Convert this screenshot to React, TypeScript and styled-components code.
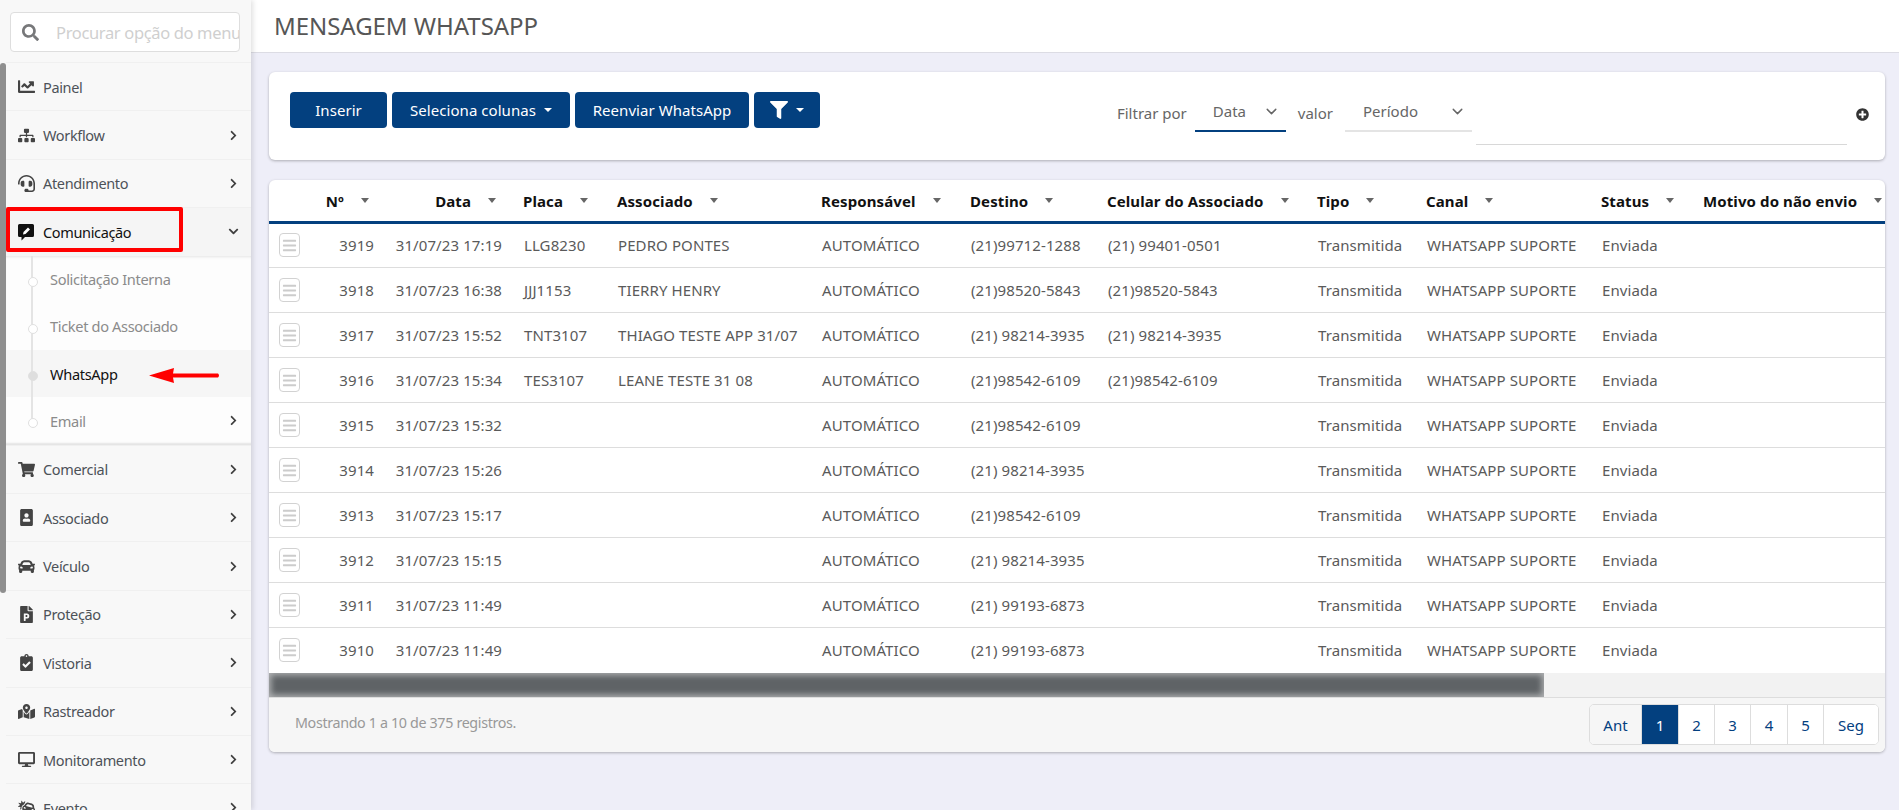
import React from "react";
import styled, { createGlobalStyle } from "styled-components";
import {
  FaSearch, FaChartLine, FaSitemap, FaHeadset, FaChevronRight, FaChevronDown, FaShoppingCart,
  FaPortrait, FaCar, FaFilePowerpoint, FaClipboardCheck, FaMapMarkedAlt, FaDesktop, FaCarCrash,
  FaFilter, FaPlusCircle, FaBars,
} from "react-icons/fa";
import { FiChevronDown } from "react-icons/fi";

const FONT = `"Noto Sans", "Open Sans", sans-serif`;
const BLUE = "#03407f";
const COLUMNS = "41px 75px 130px 94px 204px 149px 137px 210px 109px 175px 102px 190px";

const Global = createGlobalStyle`
  html, body { margin: 0; height: 810px; overflow: hidden; background: #eeeef8; }
  body { font-family: ${FONT}; font-size: 14px; letter-spacing: -0.35px; color: #555; }
  * { box-sizing: border-box; }
`;

const Shell = styled.div`
  display: flex;
  width: 1899px;
  height: 810px;
  overflow: hidden;
  position: relative;
`;

const Sidebar = styled.aside`
  flex: 0 0 251px;
  height: 810px;
  overflow: hidden;
  padding-left: 6px;
  background: #f8f8f8;
  box-shadow: 2px 0 5px rgba(0, 0, 0, 0.12);
  position: relative;
  z-index: 2;
`;

const ScrollThumb = styled.div`
  position: absolute;
  z-index: 3;
  left: 0;
  top: 63px;
  width: 6px;
  height: 530px;
  border-radius: 3px;
  background: #8f8f8f;
`;

const SearchWrap = styled.label`
  display: flex;
  align-items: center;
  margin: 12px 11px 10px 4px;
  height: 40px;
  padding-left: 11px;
  gap: 17px;
  background: #fff;
  border: 1px solid #dedede;
  border-radius: 4px;
  color: #77787a;
  font-size: 17px;
  overflow: hidden;
`;

const SearchInput = styled.input`
  flex: 1;
  min-width: 0;
  border: 0;
  outline: 0;
  padding: 0;
  font-family: ${FONT};
  font-size: 16.5px;
  letter-spacing: -0.35px;
  background: transparent;
  &::placeholder { color: #cfcfcf; opacity: 1; }
`;

const Nav = styled.nav`
  display: flex;
  flex-direction: column;
`;

const NavItem = styled.div<{ $open?: boolean }>`
  display: flex;
  align-items: center;
  flex: none;
  height: 48.4px;
  padding: 0 12px 0 10px;
  border-top: 1px solid #f0f0f0;
  font-size: 14.5px;
  color: ${(p) => (p.$open ? "#111" : "#4d5258")};
  background: ${(p) => (p.$open ? "#f5f5f5" : "transparent")};
`;

const NavIcon = styled.span`
  display: flex;
  align-items: center;
  justify-content: center;
  width: 20px;
  margin-right: 7px;
  font-size: 17px;
  color: #444;
`;

const NavLabel = styled.span`
  flex: 1;
`;

const Arrow = styled.span`
  display: flex;
  font-size: 11px;
  color: #3f3f3f;
`;

const SubMenu = styled.div`
  position: relative;
  background: #fdfdfd;
  box-shadow: inset 0 3px 3px -2px rgba(0, 0, 0, 0.1), inset 0 -3px 2px -1px rgba(0, 0, 0, 0.1);
  &::before {
    content: "";
    position: absolute;
    z-index: 1;
    left: 25px;
    top: 0;
    height: 166px;
    width: 2px;
    background: #e4e4e4;
  }
`;

const SubItem = styled.div<{ $active?: boolean }>`
  position: relative;
  display: flex;
  align-items: center;
  height: 47.25px;
  padding: 0 12px 0 44px;
  font-size: 14.6px;
  color: ${(p) => (p.$active ? "#111" : "#8b8b8b")};
  background: ${(p) => (p.$active ? "#f6f6f6" : "transparent")};
  &::before {
    content: "";
    position: absolute;
    z-index: 2;
    left: 22px;
    top: 21px;
    width: 8px;
    height: 8px;
    border-radius: 50%;
    background: ${(p) => (p.$active ? "#dedede" : "#fff")};
    border: 1px solid #e0e0e0;
  }
`;

const RedBox = styled.div`
  position: absolute;
  left: 6px;
  top: 207px;
  width: 177px;
  height: 45px;
  border: 4px solid #ff0000;
  border-radius: 2px;
  z-index: 5;
`;

const RedArrow = styled.svg`
  position: absolute;
  left: 149px;
  top: 368px;
  z-index: 5;
`;

const Main = styled.main`
  flex: 1;
  min-width: 0;
  display: flex;
  flex-direction: column;
`;

const TopBar = styled.header`
  height: 53px;
  display: flex;
  align-items: center;
  padding: 0 0 0 23px;
  background: #fff;
  border-bottom: 1px solid #dcdce4;
`;

const Title = styled.h1`
  margin: 0 0 2px;
  font-size: 24px;
  font-weight: 400;
  letter-spacing: -0.05px;
  color: #565656;
`;

const Content = styled.div`
  display: flex;
  flex-direction: column;
  gap: 20px;
  padding: 19px 14px 0 18px;
`;

const Card = styled.section`
  background: #fff;
  border-radius: 6px;
  box-shadow: 0 1px 3px rgba(0, 0, 0, 0.28);
  overflow: hidden;
  letter-spacing: 0.1px;
`;

const ToolCard = styled(Card)`
  display: flex;
  align-items: flex-start;
  height: 88px;
  padding: 20px 16px 0 21px;
`;

const ButtonRow = styled.div`
  display: flex;
  gap: 5px;
`;

const Button = styled.button<{ $w: number }>`
  display: flex;
  align-items: center;
  justify-content: center;
  gap: 8px;
  width: ${(p) => p.$w}px;
  height: 36px;
  border: 0;
  border-radius: 4px;
  background: ${BLUE};
  color: #fff;
  font-family: ${FONT};
  font-size: 15px;
  letter-spacing: 0.05px;
  padding: 0;
`;

const Caret = styled.i`
  display: inline-block;
  width: 0;
  height: 0;
  border-left: 4px solid transparent;
  border-right: 4px solid transparent;
  border-top: 4px solid currentColor;
`;

const FilterIcon = styled.span`
  display: flex;
  font-size: 18px;
`;

const Filters = styled.div`
  margin-left: auto;
  display: flex;
  align-items: flex-start;
  height: 53px;
`;

const FilterText = styled.span<{ $ml: number }>`
  margin-left: ${(p) => p.$ml}px;
  line-height: 42px;
  color: #666;
  font-size: 15px;
  letter-spacing: 0;
`;

const SelectBox = styled.div<{ $w: number; $on?: boolean; $ml: number }>`
  display: flex;
  align-items: center;
  justify-content: space-between;
  width: ${(p) => p.$w}px;
  margin-left: ${(p) => p.$ml}px;
  height: 40px;
  padding: 0 6px 0 18px;
  color: #666;
  font-size: 15px;
  letter-spacing: 0;
  border-bottom: 2px solid ${(p) => (p.$on ? BLUE : "#e4e4e4")};
`;

const ValueInput = styled.div`
  width: 371px;
  margin-left: 4px;
  height: 53px;
  border-bottom: 1px solid #d8d8d8;
`;

const PlusIcon = styled.span`
  display: flex;
  margin: 16px 0 0 9px;
  font-size: 13px;
  color: #333;
`;

const Head = styled.div`
  display: grid;
  grid-template-columns: ${COLUMNS};
  height: 44px;
  border-bottom: 3px solid ${BLUE};
  align-items: center;
`;

const Th = styled.div<{ $pad?: number }>`
  display: flex;
  align-items: center;
  justify-content: ${(p) => (p.$pad != null ? "flex-end" : "flex-start")};
  padding: ${(p) => (p.$pad != null ? `0 ${p.$pad}px 0 0` : "0 0 0 8px")};
  font-size: 15px;
  font-weight: 700;
  color: #111;
  white-space: nowrap;
  min-width: 0;
`;

const SortCaret = styled.i`
  flex: none;
  margin-left: 17px;
  width: 0;
  height: 0;
  border-left: 4.5px solid transparent;
  border-right: 4.5px solid transparent;
  border-top: 5px solid #666;
`;

const Body = styled.div`
  margin-top: -1px;
`;

const Row = styled.div`
  display: grid;
  grid-template-columns: ${COLUMNS};
  height: 45px;
  align-items: center;
  border-bottom: 1px solid #ddd;
  &:last-child { border-bottom-color: transparent; }
`;

const Td = styled.div<{ $pad?: number }>`
  padding: ${(p) => (p.$pad != null ? `0 ${p.$pad}px 0 0` : "0 0 0 9px")};
  text-align: ${(p) => (p.$pad != null ? "right" : "left")};
  font-size: 15px;
  color: #5a5a5a;
  white-space: nowrap;
  min-width: 0;
`;

const RowButton = styled.span`
  display: flex;
  align-items: center;
  justify-content: center;
  width: 21px;
  height: 24px;
  margin-left: 10px;
  border: 1px solid #d2d2d2;
  border-radius: 4px;
  font-size: 15px;
  color: #cccccc;
`;

const HScroll = styled.div`
  height: 25px;
  background: #f2f2f2;
  border-bottom: 1px solid #ddd;
`;

const HThumb = styled.div`
  width: 1275px;
  height: 24px;
  background: #5f6366;
  box-shadow: inset 0 0 6px 2px rgba(245, 245, 245, 0.55);
`;

const Footer = styled.footer`
  display: flex;
  align-items: flex-start;
  justify-content: space-between;
  height: 54px;
  padding: 6px 6px 0 26px;
  background: #f6f6f6;
`;

const Info = styled.span`
  margin-top: 9px;
  font-size: 14.3px;
  letter-spacing: -0.35px;
  color: #999;
`;

const Pager = styled.div`
  display: flex;
  height: 41px;
  border: 1px solid #ddd;
  border-radius: 5px;
  background: #fff;
  overflow: hidden;
`;

const Page = styled.span<{ $w: number; $active?: boolean; $muted?: boolean }>`
  display: flex;
  align-items: center;
  justify-content: center;
  width: ${(p) => p.$w}px;
  font-size: 15px;
  color: ${(p) => (p.$active ? "#fff" : BLUE)};
  background: ${(p) => (p.$active ? BLUE : p.$muted ? "#f6f6f6" : "#fff")};
  & + & { border-left: 1px solid ${(p) => (p.$active ? BLUE : "#ddd")}; }
`;

const BubbleIcon = styled.svg`
  display: block;
  width: 18px;
  height: 18px;
`;

const CommentPen = () => (
  <BubbleIcon viewBox="0 0 18 18">
    <path d="M2.5 1h13A1.5 1.5 0 0 1 17 2.5v10a1.5 1.5 0 0 1-1.5 1.5H8l-3.5 3.5V14h-2A1.5 1.5 0 0 1 1 12.500v-10A1.5 1.5 0 0 1 2.500 1z" fill="#111" />
    <path d="M6 11.500l.5-2.500 4.500-4.500 2 2-4.500 4.500z" fill="#fff" />
  </BubbleIcon>
);

const menuBefore = [
  { label: "Painel", icon: <FaChartLine />, arrow: false },
  { label: "Workflow", icon: <FaSitemap />, arrow: true },
  { label: "Atendimento", icon: <FaHeadset />, arrow: true },
];
const menuAfter = [
  { label: "Comercial", icon: <FaShoppingCart /> },
  { label: "Associado", icon: <FaPortrait /> },
  { label: "Veículo", icon: <FaCar /> },
  { label: "Proteção", icon: <FaFilePowerpoint /> },
  { label: "Vistoria", icon: <FaClipboardCheck /> },
  { label: "Rastreador", icon: <FaMapMarkedAlt /> },
  { label: "Monitoramento", icon: <FaDesktop /> },
  { label: "Evento", icon: <FaCarCrash /> },
];

const headers: { label: string; pad?: number }[] = [
  { label: "Nº", pad: 16 },
  { label: "Data", pad: 19 },
  { label: "Placa" },
  { label: "Associado" },
  { label: "Responsável" },
  { label: "Destino" },
  { label: "Celular do Associado" },
  { label: "Tipo" },
  { label: "Canal" },
  { label: "Status" },
  { label: "Motivo do não envio" },
];

const rows = [
  ["3919", "31/07/23 17:19", "LLG8230", "PEDRO PONTES", "(21)99712-1288", "(21) 99401-0501"],
  ["3918", "31/07/23 16:38", "JJJ1153", "TIERRY HENRY", "(21)98520-5843", "(21)98520-5843"],
  ["3917", "31/07/23 15:52", "TNT3107", "THIAGO TESTE APP 31/07", "(21) 98214-3935", "(21) 98214-3935"],
  ["3916", "31/07/23 15:34", "TES3107", "LEANE TESTE 31 08", "(21)98542-6109", "(21)98542-6109"],
  ["3915", "31/07/23 15:32", "", "", "(21)98542-6109", ""],
  ["3914", "31/07/23 15:26", "", "", "(21) 98214-3935", ""],
  ["3913", "31/07/23 15:17", "", "", "(21)98542-6109", ""],
  ["3912", "31/07/23 15:15", "", "", "(21) 98214-3935", ""],
  ["3911", "31/07/23 11:49", "", "", "(21) 99193-6873", ""],
  ["3910", "31/07/23 11:49", "", "", "(21) 99193-6873", ""],
];

const pages = [
  { label: "Ant", w: 51, muted: true },
  { label: "1", w: 37, active: true },
  { label: "2", w: 36 },
  { label: "3", w: 36 },
  { label: "4", w: 37 },
  { label: "5", w: 36 },
  { label: "Seg", w: 55 },
];

export default function App() {
  return (
    <Shell>
      <Global />
      <Sidebar>
        <SearchWrap>
          <FaSearch />
          <SearchInput placeholder="Procurar opção do menu" readOnly />
        </SearchWrap>
        <Nav>
          {menuBefore.map((m) => (
            <NavItem key={m.label}>
              <NavIcon>{m.icon}</NavIcon>
              <NavLabel>{m.label}</NavLabel>
              {m.arrow && <Arrow><FaChevronRight /></Arrow>}
            </NavItem>
          ))}
          <NavItem $open>
            <NavIcon><CommentPen /></NavIcon>
            <NavLabel>Comunicação</NavLabel>
            <Arrow><FaChevronDown /></Arrow>
          </NavItem>
          <SubMenu>
            <SubItem>Solicitação Interna</SubItem>
            <SubItem>Ticket do Associado</SubItem>
            <SubItem $active>WhatsApp</SubItem>
            <SubItem>
              <NavLabel>Email</NavLabel>
              <Arrow><FaChevronRight /></Arrow>
            </SubItem>
          </SubMenu>
          {menuAfter.map((m) => (
            <NavItem key={m.label}>
              <NavIcon>{m.icon}</NavIcon>
              <NavLabel>{m.label}</NavLabel>
              <Arrow><FaChevronRight /></Arrow>
            </NavItem>
          ))}
        </Nav>
      </Sidebar>
      <ScrollThumb />
      <RedBox />
      <RedArrow width="72" height="16" viewBox="0 0 72 16">
        <path d="M0 7.500 L25 0 L24 5.500 L69 5.500 Q71 7.500 69 9.500 L24 9.500 L25 15 Z" fill="#ff0000" />
      </RedArrow>
      <Main>
        <TopBar>
          <Title>MENSAGEM WHATSAPP</Title>
        </TopBar>
        <Content>
          <ToolCard>
            <ButtonRow>
              <Button $w={97}>Inserir</Button>
              <Button $w={178}>Seleciona colunas <Caret /></Button>
              <Button $w={174}>Reenviar WhatsApp</Button>
              <Button $w={66}><FilterIcon><FaFilter /></FilterIcon> <Caret /></Button>
            </ButtonRow>
            <Filters>
              <FilterText $ml={0}>Filtrar por</FilterText>
              <SelectBox $w={91} $on $ml={8}>Data <FiChevronDown size={17} /></SelectBox>
              <FilterText $ml={12}>valor</FilterText>
              <SelectBox $w={127} $ml={12}>Período <FiChevronDown size={17} /></SelectBox>
              <ValueInput />
              <PlusIcon><FaPlusCircle /></PlusIcon>
            </Filters>
          </ToolCard>
          <Card>
            <Head>
              <span />
              {headers.map((h) => (
                <Th key={h.label} $pad={h.pad}>
                  {h.label}
                  <SortCaret />
                </Th>
              ))}
            </Head>
            <Body>
              {rows.map((r) => (
                <Row key={r[0]}>
                  <RowButton><FaBars /></RowButton>
                  <Td $pad={11}>{r[0]}</Td>
                  <Td $pad={13}>{r[1]}</Td>
                  <Td>{r[2]}</Td>
                  <Td>{r[3]}</Td>
                  <Td>AUTOMÁTICO</Td>
                  <Td>{r[4]}</Td>
                  <Td>{r[5]}</Td>
                  <Td>Transmitida</Td>
                  <Td>WHATSAPP SUPORTE</Td>
                  <Td>Enviada</Td>
                  <Td />
                </Row>
              ))}
            </Body>
            <HScroll><HThumb /></HScroll>
            <Footer>
              <Info>Mostrando 1 a 10 de 375 registros.</Info>
              <Pager>
                {pages.map((p) => (
                  <Page key={p.label} $w={p.w} $active={p.active} $muted={p.muted}>{p.label}</Page>
                ))}
              </Pager>
            </Footer>
          </Card>
        </Content>
      </Main>
    </Shell>
  );
}
